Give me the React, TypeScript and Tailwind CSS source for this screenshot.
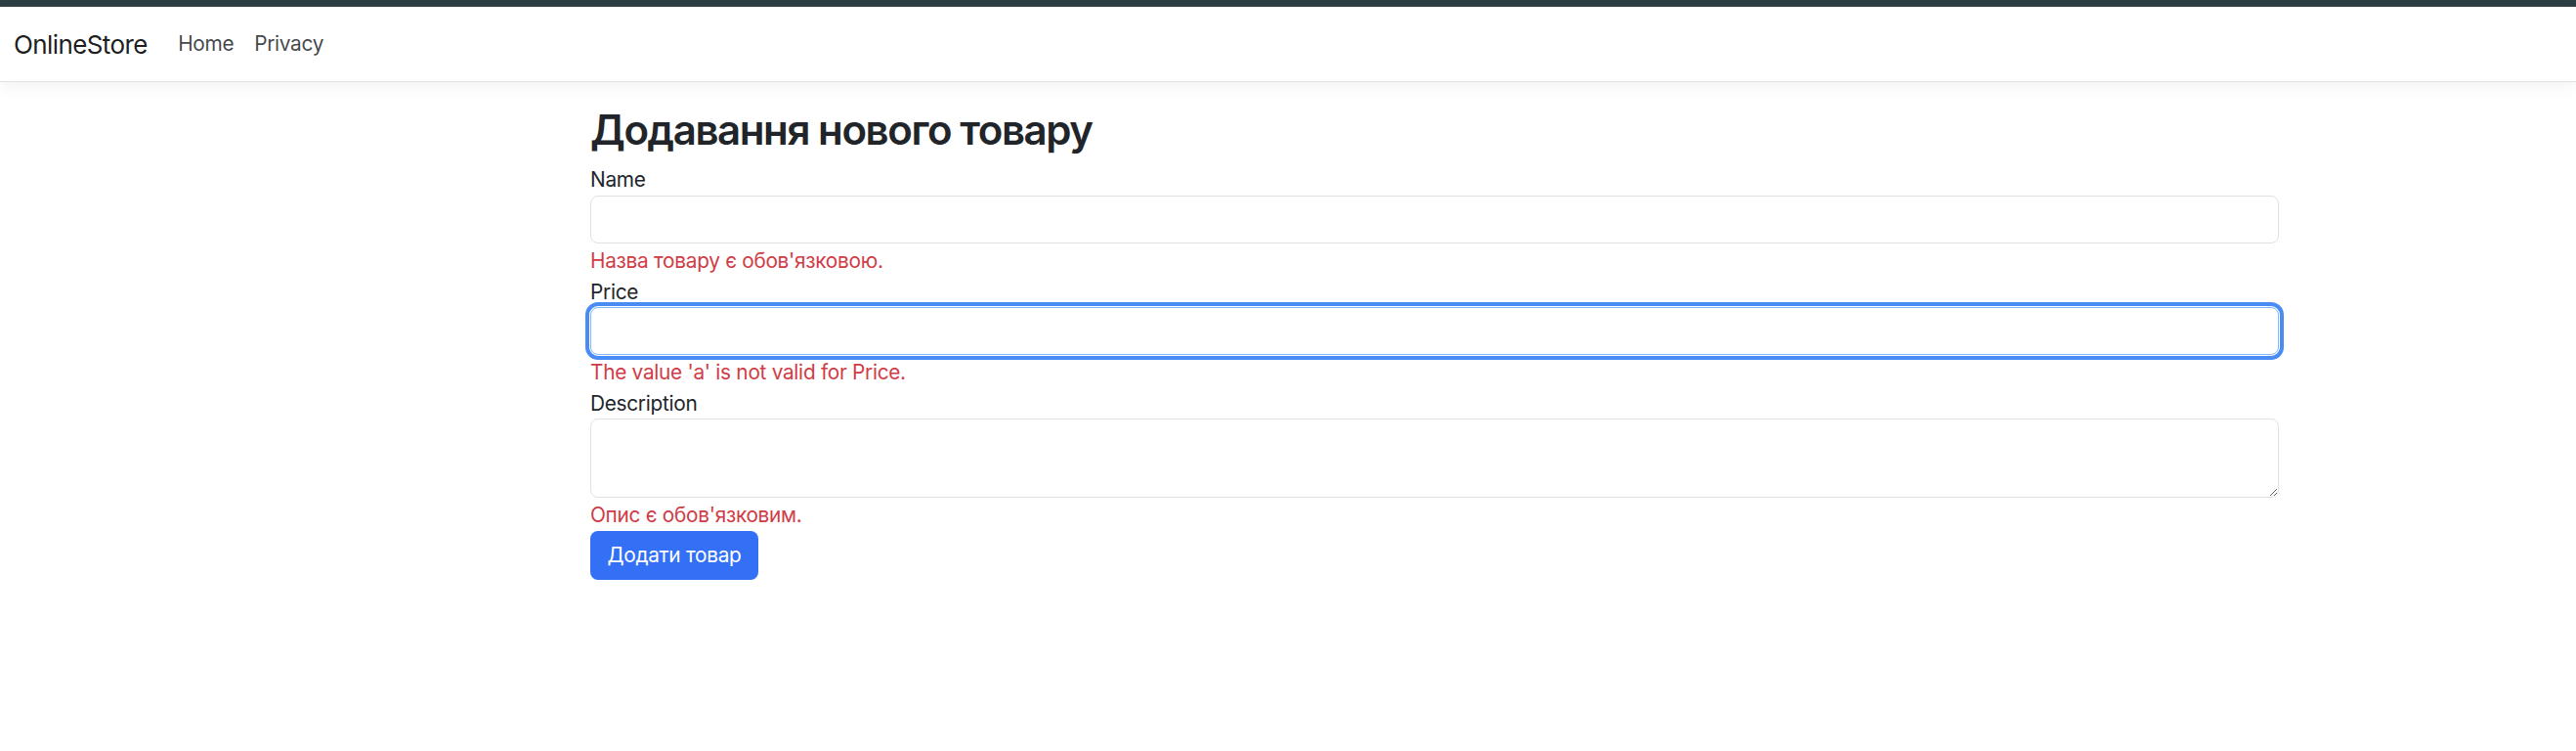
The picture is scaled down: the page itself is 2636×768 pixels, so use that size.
import React from "react";

const errors = {
  name: "Назва товару є обов'язковою.",
  price: "The value 'a' is not valid for Price.",
  description: "Опис є обов'язковим.",
};

const App = () => {
  return (
    <div className="min-h-screen w-full bg-white font-['Inter','Noto_Sans',sans-serif] text-[#212529] tracking-[-0.28px]">
      <div className="h-[7px] bg-[#2c3f44] border-b border-[#39464a]"></div>
      <nav className="h-[77px] flex items-center px-[14px] bg-white border-b border-[#dee2e6] shadow-[0_5px_16px_rgba(0,0,0,0.05)]">
        <a className="text-[26px] text-black/90 mr-[21px] tracking-[-0.6px]">OnlineStore</a>
        <a className="text-[20.8px] text-[#212529]/85 px-[10.4px]">Home</a>
        <a className="text-[20.8px] text-[#212529]/85 px-[10.4px]">Privacy</a>
      </nav>
      <main className="pl-[604px] pt-[24px]">
        <form className="w-[1728px]">
          <h2 className="text-[42px] font-semibold leading-[1.2] mb-[10px] tracking-[-1.4px]">Додавання нового товару</h2>

          <div className="mb-[1px]">
            <label className="block text-[20.8px] leading-[31.2px]">Name</label>
            <input className="block w-full h-[49px] border border-[#dee2e6] rounded-[8px] px-[15px] text-[20.8px] outline-none" />
            <span className="block mt-[2px] text-[20.8px] leading-[31.2px] text-[#d03c46]">{errors.name}</span>
          </div>

          <div className="mb-[1px]">
            <label className="block text-[20.8px] leading-[31.2px]">Price</label>
            <input className="block w-full h-[49px] border border-[#86b7fe] rounded-[8px] px-[15px] text-[20.8px] outline-4 outline-offset-1 outline-solid outline-[#4a8cf6]" />
            <span className="block mt-[2px] text-[20.8px] leading-[31.2px] text-[#d03c46]">{errors.price}</span>
          </div>

          <div>
            <label className="block text-[20.8px] leading-[31.2px]">Description</label>
            <textarea className="block w-full h-[81px] border border-[#dee2e6] rounded-[8px] px-[15px] py-[8px] text-[20.8px] outline-none resize-y"></textarea>
            <span className="block mt-[2px] text-[20.8px] leading-[31.2px] text-[#d03c46]">{errors.description}</span>
          </div>

          <button
            type="button"
            className="mt-0 h-[50px] w-[172px] rounded-[8px] bg-[#3370f5] text-white text-[20.8px]"
          >
            Додати товар
          </button>
        </form>
      </main>
    </div>
  );
};

export default App;
